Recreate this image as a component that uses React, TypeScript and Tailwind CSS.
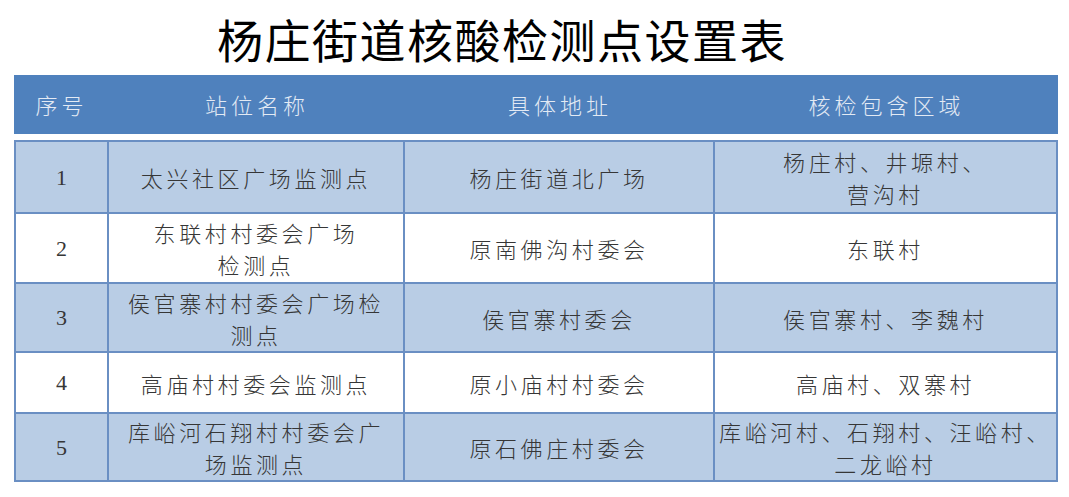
import React from "react";

const rows: { no: string; name: string[]; addr: string[]; area: string[]; h: number; bg: string }[] = [
  { no: "1", name: ["太兴社区广场监测点"], addr: ["杨庄街道北广场"], area: ["杨庄村、井塬村、", "营沟村"], h: 72, bg: "bg-[#b9cde5]" },
  { no: "2", name: ["东联村村委会广场", "检测点"], addr: ["原南佛沟村委会"], area: ["东联村"], h: 70, bg: "bg-white" },
  { no: "3", name: ["侯官寨村村委会广场检", "测点"], addr: ["侯官寨村委会"], area: ["侯官寨村、李魏村"], h: 69, bg: "bg-[#b9cde5]" },
  { no: "4", name: ["高庙村村委会监测点"], addr: ["原小庙村村委会"], area: ["高庙村、双寨村"], h: 61, bg: "bg-white" },
  { no: "5", name: ["库峪河石翔村村委会广", "场监测点"], addr: ["原石佛庄村委会"], area: ["库峪河村、石翔村、汪峪村、", "二龙峪村"], h: 68, bg: "bg-[#b9cde5]" },
];

const cellFont = {
  fontFamily: '"Noto Sans CJK SC", sans-serif',
};

function Lines({ lines }: { lines: string[] }) {
  return (
    <div className="flex flex-col items-center text-[22px] leading-[32px] tracking-[3.6px] text-[#363636] font-light whitespace-nowrap" style={cellFont}>
      {lines.map((l, i) => (
        <span key={i}>{l}</span>
      ))}
    </div>
  );
}

export default function App() {
  return (
    <div className="w-[1069px] h-[497px] bg-white relative overflow-hidden">
      <div className="h-[75px] flex items-center pl-[217px]">
        <h1
          className="text-[46px] leading-none text-black tracking-[1.5px] font-normal"
          style={{ fontFamily: '"Noto Sans CJK SC", sans-serif' }}
        >
          杨庄街道核酸检测点设置表
        </h1>
      </div>
      <div className="ml-[14px] w-[1044px]">
        <div className="h-[59px] bg-[#4f81bd] grid grid-cols-[95px_296px_310px_343px] items-center text-[22px] tracking-[4px] text-[#e3eaf4] font-light" style={cellFont}>
          <div className="text-center">序号</div>
          <div className="text-center">站位名称</div>
          <div className="text-center">具体地址</div>
          <div className="text-center">核检包含区域</div>
        </div>
        <div className="mt-[6px] border-l-2 border-t-2 border-[#6a8fc3]">
          {rows.map((r) => (
            <div
              key={r.no}
              className={`grid grid-cols-[93px_296px_310px_343px] ${r.bg}`}
              style={{ height: r.h }}
            >
              <div className="border-r-2 border-b-2 border-[#6a8fc3] flex items-center justify-center text-[22px] text-[#363636]" style={{ fontFamily: '"Liberation Serif", serif' }}>
                {r.no}
              </div>
              <div className="border-r-2 border-b-2 border-[#6a8fc3] flex items-center justify-center">
                <Lines lines={r.name} />
              </div>
              <div className="border-r-2 border-b-2 border-[#6a8fc3] flex items-center justify-center">
                <Lines lines={r.addr} />
              </div>
              <div className="border-r-2 border-b-2 border-[#6a8fc3] flex items-center justify-center">
                <Lines lines={r.area} />
              </div>
            </div>
          ))}
        </div>
      </div>
    </div>
  );
}
